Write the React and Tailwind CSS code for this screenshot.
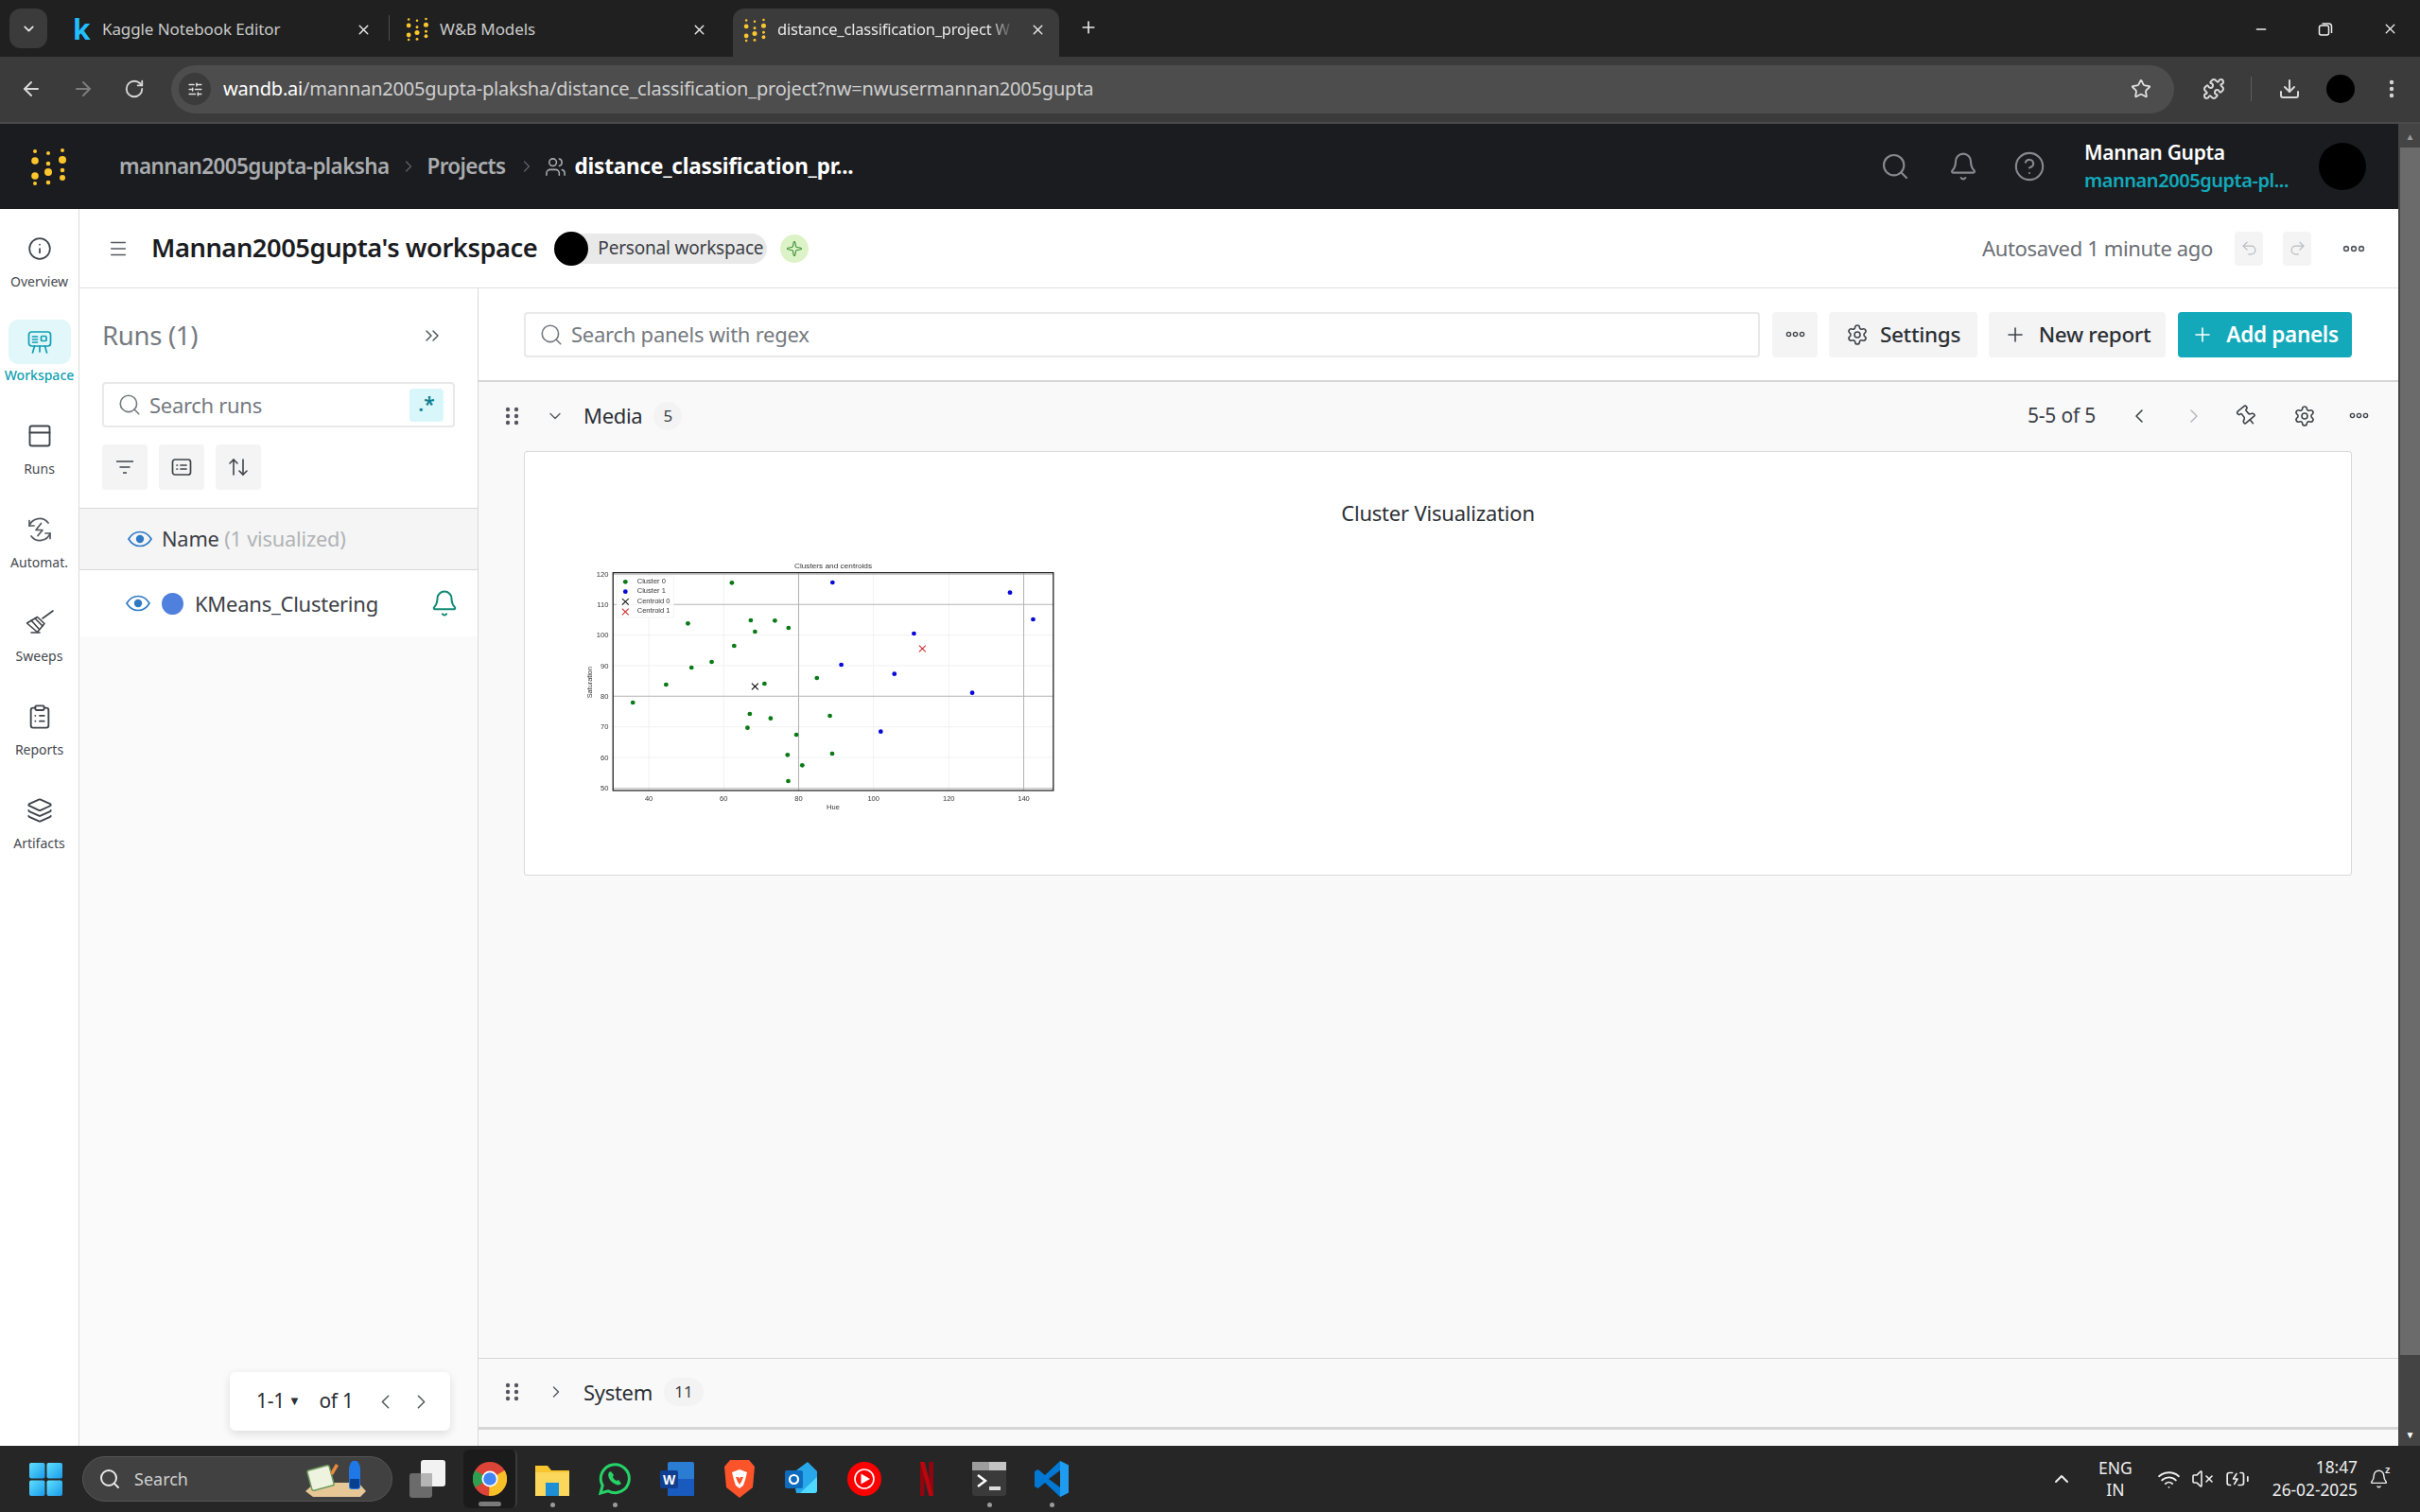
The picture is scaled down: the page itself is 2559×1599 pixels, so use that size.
import React from "react";
import {
  Info, Search, Bell, CircleHelp, Menu, ChevronsRight, ArrowUpDown, Settings, Plus, Pin,
  Undo2, Redo2, ChevronLeft, ChevronRight, ChevronDown, ChevronUp, Star, Puzzle, Download, ArrowLeft, ArrowRight,
  RotateCw, X, Minus, Users, Sparkle, ClipboardList, Layers, PanelTop, EllipsisVertical, Wifi, VolumeX, BatteryCharging, SlidersHorizontal,
} from "lucide-react";

function Logo({ className }) {
  const d = [[5,3,2],[5,13,3.8],[5,29,3.8],[5,37,2],[19,5,2],[19,16,2.3],[19,25,4],[19,36,2.3],[34,2,2],[34,12,4],[34,23,2.3],[34,31,3]];
  return (
    <svg viewBox="0 0 38 39" className={className}>
      {d.map(([x, y, r], i) => <circle key={i} cx={x} cy={y} r={r} fill="#fcc52d" />)}
    </svg>
  );
}

function Ooo({ className }) {
  return (
    <svg viewBox="0 0 24 8" className={className} fill="none" stroke="currentColor" strokeWidth="1.6">
      <circle cx="4" cy="4" r="2.4" /><circle cx="12" cy="4" r="2.4" /><circle cx="20" cy="4" r="2.4" />
    </svg>
  );
}

function Grip({ className }) {
  return (
    <svg viewBox="0 0 14 20" className={className} fill="#54585e">
      {[3, 10, 17].map((y) => <React.Fragment key={y}><circle cx="2.5" cy={y} r="2.2" /><circle cx="11.5" cy={y} r="2.2" /></React.Fragment>)}
    </svg>
  );
}

function BlueEye() {
  return (
    <svg viewBox="0 0 26 18" className="h-[18px] w-[26px]" fill="none" stroke="#2f7ac6" strokeWidth="1.7">
      <path d="M1 9c3-5 7-7.5 12-7.5S22 4 25 9c-3 5-7 7.5-12 7.5S4 14 1 9z" />
      <circle cx="13" cy="9" r="4.2" fill="#2f7ac6" stroke="none" />
    </svg>
  );
}

function WorkspaceIcon() {
  return (
    <svg viewBox="0 0 26 26" className="h-[26px] w-[26px]" fill="none" stroke="#0f9fb2" strokeWidth="1.7" strokeLinecap="round">
      <rect x="1.5" y="2" width="23" height="15" rx="3" />
      <path d="M5.5 7h5M5.5 10h5M5.5 13h5" />
      <rect x="14.5" y="6.5" width="5.5" height="5" rx="1" />
      <path d="M7.5 17 5.5 24M18.5 17l2 7M13 17v6" />
    </svg>
  );
}

function AutoIcon() {
  return (
    <svg viewBox="0 0 28 28" className="h-[28px] w-[28px]" fill="none" stroke="#54585e" strokeWidth="1.7" strokeLinecap="round" strokeLinejoin="round">
      <path d="M3 10a11.5 11.5 0 0 1 20-3M25 18a11.5 11.5 0 0 1-20 3" />
      <path d="M3 4.5V10h5M25 23.5V18h-5" />
      <path d="M15.5 7.5 10 14.5h7l-5 6" />
    </svg>
  );
}

function SweepIcon() {
  return (
    <svg viewBox="0 0 30 30" className="h-[30px] w-[30px]" fill="none" stroke="#3f4349" strokeWidth="1.6" strokeLinecap="round" strokeLinejoin="round">
      <path d="M29 2 18 10" />
      <path d="m1.5 15 11-6.5 7.5 7-7.5 9z" />
      <path d="M6 12l8 9M10 10l8 8M6 25h9" />
    </svg>
  );
}

function NavItem({ icon, label, active }) {
  return (
    <div className="flex h-[99px] w-full flex-col items-center">
      <div className={`flex h-[47px] w-[66px] items-center justify-center rounded-[10px] ${active ? "bg-[#e1f7fa]" : ""}`}>{icon}</div>
      <div className={`mt-[3px] text-[14px] leading-[18px] ${active ? "font-medium text-[#0f9fb2]" : "text-[#45494f]"}`}>{label}</div>
    </div>
  );
}

function Btn({ className = "", children }) {
  return <div className={`flex h-[48px] items-center justify-center rounded-[4px] bg-[#f4f4f4] ${className}`}>{children}</div>;
}

function Plot() {
  const green = [[505,112],[370,241],[563,231],[637,232],[679,255],[576,267],[512,312],[443,363],[381,381],[303,435],[605,432],[766,414],[201,492],[560,528],[624,542],[806,534],[553,572],[703,594],[676,658],[813,654],[721,691],[678,741]];
  const blue = [[814,111],[1359,143],[1430,228],[1064,273],[841,372],[1004,401],[1243,461],[962,584]];
  const yMajor = [85, 181, 472, 764];
  const yMinor = [278, 375, 569, 666];
  const xMajor = [710, 1401];
  const xMinor = [250, 480, 940, 1171];
  const yT = [[120,85],[110,182],[100,278],[90,375],[80,472],[70,569],[60,666],[50,764]];
  const xT = [[40,250],[60,480],[80,710],[100,940],[120,1171],[140,1401]];
  const tc = { fontFamily: "'Liberation Sans', sans-serif", fontSize: 22, fill: "#333" };
  const Cross = ({ x, y, c, s = 10, w = 3 }) => <path d={`M${x-s} ${y-s}L${x+s} ${y+s}M${x+s} ${y-s}L${x-s} ${y+s}`} stroke={c} strokeWidth={w} />;
  return (
    <svg viewBox="0 0 1568 870" preserveAspectRatio="none" className="h-[290px] w-[540px] blur-[0.35px]">
      {yMinor.map((y) => <line key={y} x1="140" x2="1492" y1={y} y2={y} stroke="#f1f1f1" strokeWidth="3" />)}
      {xMinor.map((x) => <line key={x} x1={x} x2={x} y1="80" y2="771" stroke="#f1f1f1" strokeWidth="3" />)}
      {yMajor.map((y) => <line key={y} x1="140" x2="1492" y1={y} y2={y} stroke="#b3b3b3" strokeWidth="3" />)}
      {xMajor.map((x) => <line key={x} x1={x} x2={x} y1="80" y2="771" stroke="#b3b3b3" strokeWidth="3" />)}
      <rect x="140" y="80" width="1352" height="691" fill="none" stroke="#111" strokeWidth="3.5" />
      {green.map(([x, y], i) => <circle key={i} cx={x} cy={y} r="7" fill="#0a7a16" />)}
      {blue.map(([x, y], i) => <circle key={i} cx={x} cy={y} r="7" fill="#0808d8" />)}
      <Cross x={576} y={441} c="#000" />
      <Cross x={1090} y={321} c="#d02a2a" />
      <rect x="151" y="90" width="176" height="132" fill="#fff" fillOpacity="0.85" stroke="#eee" strokeWidth="2" />
      <circle cx="178" cy="109" r="7" fill="#0a7a16" />
      <circle cx="178" cy="140" r="7" fill="#0808d8" />
      <Cross x={178} y={172} c="#000" />
      <Cross x={178} y={204} c="#d02a2a" />
      {["Cluster 0", "Cluster 1", "Centroid 0", "Centroid 1"].map((t, i) => <text key={t} x="214" y={114 + i * 31} {...tc}>{t}</text>)}
      <text x="816" y="65" textAnchor="middle" {...tc} fontSize="24">Clusters and centroids</text>
      <text x="816" y="830" textAnchor="middle" {...tc}>Hue</text>
      <text x="76" y="428" textAnchor="middle" transform="rotate(-90 76 428)" {...tc}>Saturation</text>
      {yT.map(([t, y]) => <text key={t} x="126" y={y + 8} textAnchor="end" {...tc}>{t}</text>)}
      {xT.map(([t, x]) => <text key={t} x={x} y="803" textAnchor="middle" {...tc}>{t}</text>)}
    </svg>
  );
}

function SectionRow({ open, label, count, right, h, badge }) {
  return (
    <div className={`flex shrink-0 items-center pb-[2px] pl-[28px] ${h}`}>
      <Grip className="h-[20px] w-[15px]" />
      <div className="ml-[28px] flex w-[40px] items-center">
        {open ? <ChevronDown className="h-[20px] w-[20px] text-[#54585e]" strokeWidth={1.6} /> : <ChevronRight className="ml-[1px] h-[20px] w-[20px] text-[#54585e]" strokeWidth={1.6} />}
      </div>
      <span className="text-[22px] tracking-[-0.3px] text-[#2c3036]">{label}</span>
      <div className={`ml-[12px] flex h-[30px] items-center justify-center rounded-full bg-[#f3f3f3] text-[17px] text-[#3c4046] ${badge}`}>{count}</div>
      {right}
    </div>
  );
}

function TaskIcon({ children, dot, slot = "w-[66px]" }) {
  return (
    <div className={`relative flex h-[70px] shrink-0 items-center justify-center ${slot}`}>
      {children}
      {dot && <span className="absolute bottom-[5px] h-[5px] w-[5px] rounded-full bg-[#9a9a9a]" />}
    </div>
  );
}

const sideNav = [
  { label: "Overview", icon: <Info className="h-[26px] w-[26px] text-[#3f4349]" strokeWidth={1.6} /> },
  { label: "Workspace", active: true, icon: <WorkspaceIcon /> },
  { label: "Runs", icon: <PanelTop className="h-[28px] w-[28px] text-[#3f4349]" strokeWidth={1.6} /> },
  { label: "Automat.", icon: <AutoIcon /> },
  { label: "Sweeps", icon: <SweepIcon /> },
  { label: "Reports", icon: <ClipboardList className="h-[28px] w-[28px] text-[#3f4349]" strokeWidth={1.6} /> },
  { label: "Artifacts", icon: <Layers className="h-[28px] w-[28px] text-[#3f4349]" strokeWidth={1.6} /> },
];

export default function App() {
  return (
    <div className="flex h-[1599px] w-[2559px] flex-col overflow-hidden bg-white font-['Noto_Sans',sans-serif]">
      {/* Tab strip */}
      <div className="flex h-[60px] shrink-0 items-end bg-[#202020] pl-[10px]">
        <div className="mb-[9px] flex h-[42px] w-[40px] items-center justify-center rounded-[12px] bg-[#3b3b3b]">
          <ChevronDown className="h-[17px] w-[17px] text-[#e6e6e6]" strokeWidth={2.5} />
        </div>
        <div className="ml-[7px] mt-[10px] flex h-[42px] w-[354px] items-center self-start pl-[11px] pr-[14px] text-[#c9c9c9]">
          <div className="flex w-[40px] items-center pl-[9px] text-[30px] font-bold leading-none text-[#20beff]">k</div>
          <div className="w-[260px] whitespace-nowrap text-[17px] tracking-[-0.1px]">Kaggle Notebook Editor</div>
          <X className="ml-[8px] h-[17px] w-[17px] text-[#e6e6e6]" strokeWidth={2} />
        </div>
        <div className="mb-[17px] h-[27px] w-px bg-[#4c4c4c]" />
        <div className="mt-[10px] flex h-[42px] w-[363px] items-center self-start pl-[17px] text-[#c9c9c9]">
          <Logo className="h-[26px] w-[24px]" />
          <div className="ml-[12px] w-[266px] text-[17px] tracking-[-0.1px]">W&amp;B Models</div>
          <X className="h-[17px] w-[17px] text-[#e6e6e6]" strokeWidth={2} />
        </div>
        <div className="flex h-[51px] w-[345px] shrink-0 items-center rounded-t-[12px] bg-[#3b3b3b] pb-[6px] pl-[11px] pr-[14px] text-[#e8e8e8]">
          <div className="flex w-[36px] shrink-0 items-center"><Logo className="h-[26px] w-[24px]" /></div>
          <div className="w-[250px] overflow-hidden whitespace-nowrap text-[16.5px] tracking-[-0.2px] [mask-image:linear-gradient(to_right,black_90%,transparent)]">distance_classification_project W</div>
          <div className="flex flex-1 justify-end"><X className="h-[17px] w-[17px] text-[#e6e6e6]" strokeWidth={2} /></div>
        </div>
        <Plus className="mb-[21px] ml-[21px] h-[20px] w-[20px] text-[#e6e6e6]" strokeWidth={2} />
        <div className="flex-1" />
        <div className="mb-[21px] flex items-center gap-[52px] pr-[23px] text-[#eee]">
          <Minus className="h-[16px] w-[16px]" strokeWidth={2} />
          <svg viewBox="0 0 16 16" className="h-[16px] w-[16px]" fill="none" stroke="currentColor" strokeWidth="1.5"><rect x="1.5" y="4" width="10" height="10" rx="2" /><path d="M4.5 2h7a3 3 0 0 1 3 3v7" /></svg>
          <X className="h-[17px] w-[17px]" strokeWidth={1.8} />
        </div>
      </div>

      {/* Toolbar */}
      <div className="flex h-[71px] shrink-0 items-center border-b-2 border-[#4a4a4a] bg-[#3b3b3b] pb-[1px] text-[#d8d8d8]">
        <ArrowLeft className="ml-[21px] h-[24px] w-[24px]" strokeWidth={2} />
        <ArrowRight className="ml-[31px] h-[24px] w-[24px] text-[#7d7d7d]" strokeWidth={2} />
        <RotateCw className="ml-[31px] h-[22px] w-[22px]" strokeWidth={2} />
        <div className="ml-[28px] flex h-[51px] w-[2118px] items-center rounded-full bg-[#4d4d4d] pl-[8px] pr-[24px]">
          <div className="flex h-[34px] w-[34px] items-center justify-center rounded-full bg-[#3b3b3b]">
            <SlidersHorizontal className="h-[17px] w-[17px] text-[#e0e0e0]" strokeWidth={2} />
          </div>
          <div className="ml-[13px] text-[20px] tracking-[-0.2px] text-[#cfcfcf]"><span className="text-white">wandb.ai</span>/mannan2005gupta-plaksha/distance_classification_project?nw=nwusermannan2005gupta</div>
          <div className="flex-1" />
          <Star className="h-[22px] w-[22px] text-[#e0e0e0]" strokeWidth={2} />
        </div>
        <Puzzle className="ml-[30px] h-[24px] w-[24px]" strokeWidth={2} />
        <div className="ml-[27px] h-[26px] w-px bg-[#5e5e5e]" />
        <Download className="ml-[28px] h-[24px] w-[24px]" strokeWidth={2} />
        <div className="ml-[27px] h-[30px] w-[30px] rounded-full bg-black" />
        <EllipsisVertical className="ml-[27px] h-[24px] w-[24px]" strokeWidth={2.4} />
      </div>

      {/* Page + scrollbar */}
      <div className="flex min-h-0 flex-1">
        <div className="flex min-w-0 flex-1 flex-col">
          {/* W&B header */}
          <div className="flex h-[90px] shrink-0 items-center bg-[#1a1c1f] pl-[32px] pr-[34px]">
            <Logo className="h-[39px] w-[38px]" />
            <span className="ml-[56px] text-[22.5px] font-semibold tracking-[-0.63px] text-[#a9abae]">mannan2005gupta-plaksha</span>
            <ChevronRight className="ml-[11px] h-[20px] w-[20px] text-[#5f6368]" strokeWidth={1.5} />
            <span className="ml-[9px] text-[22.5px] font-semibold tracking-[-0.63px] text-[#a9abae]">Projects</span>
            <ChevronRight className="ml-[12px] h-[20px] w-[20px] text-[#5f6368]" strokeWidth={1.5} />
            <Users className="ml-[9px] h-[23px] w-[23px] text-[#a9abae]" strokeWidth={1.6} />
            <span className="ml-[9px] text-[22.5px] font-bold tracking-[-0.18px] text-white">distance_classification_pr...</span>
            <div className="flex-1" />
            <Search className="h-[32px] w-[32px] text-[#85888c]" strokeWidth={1.6} />
            <Bell className="ml-[40px] h-[32px] w-[32px] text-[#85888c]" strokeWidth={1.6} />
            <CircleHelp className="ml-[37px] h-[34px] w-[34px] text-[#85888c]" strokeWidth={1.5} />
            <div className="ml-[41px] flex w-[248px] flex-col">
              <span className="text-[21px] font-semibold leading-[30px] tracking-[-0.3px] text-white">Mannan Gupta</span>
              <span className="text-[20px] font-semibold leading-[30px] tracking-[-0.45px] text-[#13a9ba]">mannan2005gupta-pl...</span>
            </div>
            <div className="h-[50px] w-[50px] rounded-full bg-black" />
          </div>

          <div className="flex min-h-0 flex-1">
            {/* Sidebar */}
            <div className="flex w-[84px] shrink-0 flex-col items-center border-r border-[#dcdcdc] bg-white pt-[18px]">
              {sideNav.map((n) => <NavItem key={n.label} {...n} />)}
            </div>

            <div className="flex min-w-0 flex-1 flex-col">
              {/* Title bar */}
              <div className="flex h-[84px] shrink-0 items-center border-b border-[#e2e2e2] bg-white pl-[30px] pr-[35px]">
                <Menu className="h-[22px] w-[22px] text-[#54585e]" strokeWidth={1.6} />
                <span className="ml-[24px] text-[27.3px] font-semibold tracking-[-0.45px] text-[#1a1c1f]">Mannan2005gupta's workspace</span>
                <div className="ml-[18px] flex h-[32px] w-[225px] items-center rounded-full bg-[#e9e9e9]">
                  <div className="h-[36px] w-[36px] shrink-0 rounded-full bg-black" />
                  <span className="ml-[10px] text-[19px] tracking-[-0.2px] text-[#3c4046]">Personal workspace</span>
                </div>
                <div className="ml-[14px] flex h-[30px] w-[30px] items-center justify-center rounded-full bg-[#dcf3c8]">
                  <Sparkle className="h-[18px] w-[18px] text-[#3f8f3a]" strokeWidth={1.5} />
                </div>
                <div className="flex-1" />
                <span className="text-[22px] tracking-[-0.35px] text-[#6b6f75]">Autosaved 1 minute ago</span>
                <div className="ml-[23px] flex h-[36px] w-[30px] items-center justify-center rounded-[4px] bg-[#f4f4f4]"><Undo2 className="h-[19px] w-[19px] text-[#b8babd]" strokeWidth={1.6} /></div>
                <div className="ml-[21px] flex h-[36px] w-[30px] items-center justify-center rounded-[4px] bg-[#f4f4f4]"><Redo2 className="h-[19px] w-[19px] text-[#b8babd]" strokeWidth={1.6} /></div>
                <Ooo className="ml-[33px] h-[8px] w-[24px] text-[#54585e]" />
              </div>

              <div className="flex min-h-0 flex-1">
                {/* Runs panel */}
                <div className="relative flex w-[422px] shrink-0 flex-col border-r border-[#d9d9d9] bg-[#fafafa]">
                  <div className="flex h-[232px] shrink-0 flex-col bg-white pl-[24px]">
                    <div className="flex h-[99px] items-center">
                      <span className="text-[27.5px] tracking-[-0.3px] text-[#757a80]">Runs (1)</span>
                      <ChevronsRight className="ml-[236px] h-[24px] w-[24px] text-[#54585e]" strokeWidth={1.5} />
                    </div>
                    <div className="flex h-[48px] w-[373px] items-center rounded-[4px] border-2 border-[#e9e9e9] pl-[14px] pr-[10px]">
                      <Search className="h-[26px] w-[26px] text-[#757a80]" strokeWidth={1.5} />
                      <span className="ml-[8px] text-[22px] tracking-[-0.3px] text-[#757a80]">Search runs</span>
                      <div className="flex-1" />
                      <div className="flex h-[35px] w-[36px] items-center justify-center rounded-[4px] bg-[#d9f6fa] text-[21px] font-semibold text-[#0b7f8f]">.*</div>
                    </div>
                    <div className="mt-[18px] flex gap-[12px]">
                      <Btn className="w-[48px]">
                        <svg viewBox="0 0 24 24" className="h-[24px] w-[24px]" fill="none" stroke="#3f4349" strokeWidth="1.7"><path d="M3 6h18M6.5 12h11M10 18h4" /></svg>
                      </Btn>
                      <Btn className="w-[48px]">
                        <svg viewBox="0 0 24 24" className="h-[24px] w-[24px]" fill="none" stroke="#3f4349" strokeWidth="1.7" strokeLinecap="round"><rect x="2.5" y="4" width="19" height="16" rx="2.5" /><path d="M7 10h.5M7 14h.5M11 10h6M11 14h6" /></svg>
                      </Btn>
                      <Btn className="w-[48px]"><ArrowUpDown className="h-[24px] w-[24px] text-[#3f4349]" strokeWidth={1.6} /></Btn>
                    </div>
                  </div>
                  <div className="flex h-[66px] shrink-0 items-center border-y border-[#d9d9d9] bg-[#f5f5f5] pl-[51px]">
                    <BlueEye />
                    <span className="ml-[10px] text-[21.8px] tracking-[-0.2px] text-[#3c4046]">Name <span className="text-[#b0b3b6]">(1 visualized)</span></span>
                  </div>
                  <div className="flex h-[70px] shrink-0 items-center bg-white pl-[49px]">
                    <BlueEye />
                    <div className="ml-[12px] h-[23px] w-[23px] rounded-full bg-[#5080de]" />
                    <span className="ml-[12px] w-[249px] text-[22px] tracking-[-0.25px] text-[#3c4046]">KMeans_Clustering</span>
                    <Bell className="h-[30px] w-[30px] text-[#0f8a74]" strokeWidth={1.6} />
                  </div>
                  <div className="absolute bottom-[16px] right-[29px] flex h-[62px] w-[233px] items-center rounded-[6px] bg-white pl-[28px] text-[21px] tracking-[-0.3px] text-[#2c3036] shadow-[0_3px_10px_rgba(0,0,0,0.12)]">
                    <span>1-1</span>
                    <span className="ml-[4px] text-[13px]">▼</span>
                    <span className="ml-[20px]">of 1</span>
                    <ChevronLeft className="ml-[21px] h-[25px] w-[25px] text-[#54585e]" strokeWidth={1.5} />
                    <ChevronRight className="ml-[13px] h-[25px] w-[25px] text-[#54585e]" strokeWidth={1.5} />
                  </div>
                </div>

                {/* Main */}
                <div className="flex min-w-0 flex-1 flex-col bg-[#f9f9f9]">
                  <div className="flex h-[99px] shrink-0 items-center border-b-2 border-[#d6d6d6] bg-white pl-[48px] pr-[49px]">
                    <div className="flex h-[48px] flex-1 items-center rounded-[4px] border-2 border-[#e9e9e9] pl-[14px]">
                      <Search className="h-[26px] w-[26px] text-[#757a80]" strokeWidth={1.5} />
                      <span className="ml-[8px] text-[22px] tracking-[-0.25px] text-[#757a80]">Search panels with regex</span>
                    </div>
                    <Btn className="ml-[13px] w-[48px]"><Ooo className="h-[7px] w-[21px] text-[#3f4349]" /></Btn>
                    <Btn className="ml-[12px] w-[157px] gap-[12px]">
                      <Settings className="h-[24px] w-[24px] text-[#3f4349]" strokeWidth={1.6} />
                      <span className="text-[22.5px] font-medium tracking-[-0.3px] text-[#2c3036]">Settings</span>
                    </Btn>
                    <Btn className="ml-[12px] w-[187px] gap-[13px]">
                      <Plus className="h-[24px] w-[24px] text-[#3f4349]" strokeWidth={1.6} />
                      <span className="text-[22.5px] font-medium tracking-[-0.3px] text-[#2c3036]">New report</span>
                    </Btn>
                    <div className="ml-[13px] flex h-[48px] w-[184px] items-center justify-center gap-[13px] rounded-[4px] bg-[#13a9ba]">
                      <Plus className="h-[24px] w-[24px] text-white" strokeWidth={1.6} />
                      <span className="text-[22.5px] font-semibold tracking-[-0.3px] text-white">Add panels</span>
                    </div>
                  </div>

                  <SectionRow open label="Media" count="5" h="h-[73px]" badge="w-[30px]" right={
                    <div className="ml-auto flex items-center pr-[30px]">
                      <span className="text-[21px] tracking-[-0.2px] text-[#3c4046]">5-5 of 5</span>
                      <ChevronLeft className="ml-[34px] h-[24px] w-[24px] text-[#3f4349]" strokeWidth={1.6} />
                      <ChevronRight className="ml-[34px] h-[24px] w-[24px] text-[#b8babd]" strokeWidth={1.6} />
                      <Pin className="ml-[32px] h-[24px] w-[24px] rotate-[-40deg] text-[#3f4349]" strokeWidth={1.6} />
                      <Settings className="ml-[37px] h-[24px] w-[24px] text-[#3f4349]" strokeWidth={1.6} />
                      <Ooo className="ml-[34px] h-[7px] w-[23px] text-[#3f4349]" />
                    </div>
                  } />

                  <div className="ml-[48px] mr-[49px] h-[449px] shrink-0 rounded-[3px] border border-[#d9d9d9] bg-white">
                    <div className="pt-[49px] text-center text-[22px] leading-[30px] tracking-[-0.2px] text-[#2c3036]">Cluster Visualization</div>
                    <div className="ml-[45px] mt-[22px]"><Plot /></div>
                  </div>

                  <div className="flex-1" />
                  <div className="h-[76px] shrink-0 border-y border-b-[3px] border-[#d6d6d6]">
                    <SectionRow label="System" count="11" h="h-[72px]" badge="w-[42px]" />
                  </div>
                  <div className="h-[17px] shrink-0" />
                </div>
              </div>
            </div>
          </div>
        </div>

        {/* Scrollbar */}
        <div className="flex w-[23px] shrink-0 flex-col items-center bg-[#444444] pl-[2px]">
          <div className="flex h-[25px] items-center text-[10px] leading-none text-[#9a9a9a]">▲</div>
          <div className="h-[1277px] w-full bg-[#6b6b6b]" />
          <div className="flex-1" />
          <div className="flex h-[25px] items-center text-[10px] leading-none text-white">▼</div>
        </div>
      </div>

      {/* Taskbar */}
      <div className="flex h-[70px] shrink-0 items-center bg-[#262626] pl-[31px] pr-[30px]">
        <svg viewBox="0 0 36 36" className="h-[35px] w-[35px] shrink-0">
          <defs><linearGradient id="win" x1="0" y1="0" x2="1" y2="1"><stop offset="0" stopColor="#5fe0ff" /><stop offset="1" stopColor="#1a9ae8" /></linearGradient></defs>
          <rect x="0" y="0" width="17" height="17" rx="2" fill="url(#win)" /><rect x="19" y="0" width="17" height="17" rx="2" fill="url(#win)" />
          <rect x="0" y="19" width="17" height="17" rx="2" fill="url(#win)" /><rect x="19" y="19" width="17" height="17" rx="2" fill="url(#win)" />
        </svg>
        <div className="ml-[21px] flex h-[48px] w-[328px] shrink-0 items-center rounded-full border border-[#555] bg-[#414141] pl-[16px]">
          <Search className="h-[24px] w-[24px] text-[#e8e8e8]" strokeWidth={2} />
          <span className="ml-[14px] text-[18px] text-[#cfcfcf]">Search</span>
          <svg viewBox="0 0 68 40" className="ml-[122px] h-[40px] w-[68px]">
            <path d="M2 33 12 24h46l8 9-6 6H10z" fill="#e6c795" />
            <rect x="6" y="8" width="24" height="22" rx="2" transform="rotate(-15 18 19)" fill="#eef3e0" stroke="#6f9c5c" strokeWidth="1.5" />
            <path d="M28 14 34 4l3 2-6 10z" fill="#e68a3c" />
            <path d="M48 10c0-4 2-8 4-9h4c2 1 4 5 4 9v18a3 3 0 0 1-3 3H51a3 3 0 0 1-3-3z" fill="#1e78e6" />
            <path d="M49 20h10v8a2 2 0 0 1-2 2h-6a2 2 0 0 1-2-2z" fill="#0a3f8f" />
          </svg>
        </div>
        <svg viewBox="0 0 38 40" className="ml-[18px] h-[40px] w-[38px] shrink-0">
          <rect x="0" y="14" width="24" height="26" rx="3" fill="#6b6b6b" /><rect x="12" y="0" width="26" height="28" rx="3" fill="#f2f2f2" /><rect x="12" y="14" width="12" height="14" fill="#b5b5b5" />
        </svg>
        <div className="relative ml-[19px] flex h-[62px] w-[57px] shrink-0 items-center justify-center rounded-[6px] border-r-2 border-[#3a3a3a] bg-[#1b1b1b]">
          <svg viewBox="0 0 36 36" className="h-[36px] w-[36px]">
            <circle cx="18" cy="18" r="18" fill="#db4437" />
            <path d="M18 18 2.4 27A18 18 0 0 1 2.4 9z" fill="#2f9e4f" />
            <path d="M18 18 33.6 9A18 18 0 0 1 18 36l-1 0z" fill="#f6c026" />
            <circle cx="18" cy="18" r="8.5" fill="#fff" /><circle cx="18" cy="18" r="6.8" fill="#4285f4" />
          </svg>
          <span className="absolute bottom-[2px] h-[5px] w-[24px] rounded-full bg-[#7a7a7a]" />
        </div>
        <div className="ml-[4px] flex">
          <TaskIcon dot>
            <svg viewBox="0 0 36 36" className="h-[36px] w-[36px]"><path d="M0 4h13l4 5h19v27H0z" fill="#f7c52d" /><rect y="11" width="36" height="25" fill="#fbd75b" /><rect x="11" y="22" width="14" height="14" fill="#1c8fd6" /></svg>
          </TaskIcon>
          <TaskIcon dot>
            <svg viewBox="0 0 36 36" className="h-[36px] w-[36px]" fill="none"><path d="M3 33l2.2-8A15 15 0 1 1 11 30.8z" stroke="#25d366" strokeWidth="3" /><path d="M12 11c-2 3 0 8 4 11s7 3 9 1l-3-4-2 1c-2-1-3-2-4-4l1-2-3-4z" fill="#25d366" /></svg>
          </TaskIcon>
          <TaskIcon>
            <svg viewBox="0 0 36 36" className="h-[36px] w-[36px]"><rect x="8" y="0" width="28" height="36" rx="2" fill="#2b7cd3" /><rect x="8" y="18" width="28" height="18" fill="#185abd" /><rect x="0" y="9" width="19" height="19" rx="2" fill="#103f91" /><text x="9.5" y="24" textAnchor="middle" fontSize="14" fontWeight="700" fill="#fff" fontFamily="'Liberation Sans',sans-serif">W</text></svg>
          </TaskIcon>
          <TaskIcon>
            <svg viewBox="0 0 36 40" className="h-[40px] w-[36px]"><path d="M8 0h20l6 7-2 22-14 11L4 29 2 7z" fill="#fb542b" /><path d="M10 13l8-3 8 3-2 8-2 6-4 3-4-3-2-6z" fill="#fff" /><path d="M14 18h3l1 2 1-2h3l-2 5-2 3-2-3z" fill="#fb542b" /></svg>
          </TaskIcon>
          <TaskIcon>
            <svg viewBox="0 0 36 36" className="h-[36px] w-[36px]"><path d="M8 12 24 0l10 10v20a3 3 0 0 1-3 3H12z" fill="#28a8ea" /><path d="M16 33 34 16v14a3 3 0 0 1-3 3z" fill="#50d9ff" /><rect x="0" y="9" width="19" height="19" rx="2" fill="#0f6cbd" /><circle cx="9.5" cy="18.5" r="4.5" fill="none" stroke="#fff" strokeWidth="2.2" /></svg>
          </TaskIcon>
          <TaskIcon>
            <svg viewBox="0 0 36 36" className="h-[36px] w-[36px]"><circle cx="18" cy="18" r="18" fill="#f00" /><circle cx="18" cy="18" r="10" fill="none" stroke="#fff" strokeWidth="1.6" /><path d="M14.5 12.5 24 18l-9.5 5.5z" fill="#fff" /></svg>
          </TaskIcon>
          <TaskIcon>
            <svg viewBox="0 0 18 36" className="h-[36px] w-[14px]" preserveAspectRatio="none"><path d="M0 0h6v36l-6 .8z" fill="#8f0610" /><path d="M12 0h6v36.8l-6-.8z" fill="#8f0610" /><path d="M0 0h6l12 36.8-6-.8z" fill="#b8070f" /></svg>
          </TaskIcon>
          <TaskIcon dot>
            <svg viewBox="0 0 36 36" className="h-[36px] w-[36px]"><rect width="36" height="36" rx="3" fill="#3a3a3a" /><rect width="36" height="9" fill="#9d9d9d" /><rect x="18" width="18" height="9" fill="#c4c4c4" /><path d="M6 14l8 6-8 6" fill="none" stroke="#fff" strokeWidth="2.5" /><rect x="18" y="26" width="12" height="4" fill="#ddd" /></svg>
          </TaskIcon>
          <TaskIcon dot>
            <svg viewBox="0 0 36 38" className="h-[38px] w-[36px]"><path d="M27 0 36 4.5v29L27 38 11 23 3.8 29 0 27V11l3.8-2L11 15z" fill="#0078d4" /><path d="M27 10 15 19l12 9z" fill="#262626" /><path d="M27 0 36 4.5v29L27 38z" fill="#1f9cf0" /></svg>
          </TaskIcon>
        </div>
        <div className="flex-1" />
        <ChevronUp className="h-[24px] w-[24px] text-[#eee]" strokeWidth={2} />
        <div className="ml-[27px] flex flex-col items-center text-[17.5px] leading-[23px] text-[#eee]"><span>ENG</span><span>IN</span></div>
        <Wifi className="ml-[26px] h-[25px] w-[25px] text-[#eee]" strokeWidth={1.8} />
        <VolumeX className="ml-[11px] h-[24px] w-[24px] text-[#eee]" strokeWidth={1.6} />
        <BatteryCharging className="ml-[12px] h-[26px] w-[26px] text-[#eee]" strokeWidth={1.6} />
        <div className="ml-[24px] flex flex-col items-end text-[17.3px] leading-[24px] text-[#eee]"><span>18:47</span><span>26-02-2025</span></div>
        <div className="ml-[12px] flex w-[24px] items-start">
          <Bell className="h-[24px] w-[21px] text-[#eee]" strokeWidth={1.6} />
          <span className="-ml-[4px] -mt-[4px] text-[11px] font-semibold leading-none text-[#eee]">z</span>
        </div>
      </div>
    </div>
  );
}
